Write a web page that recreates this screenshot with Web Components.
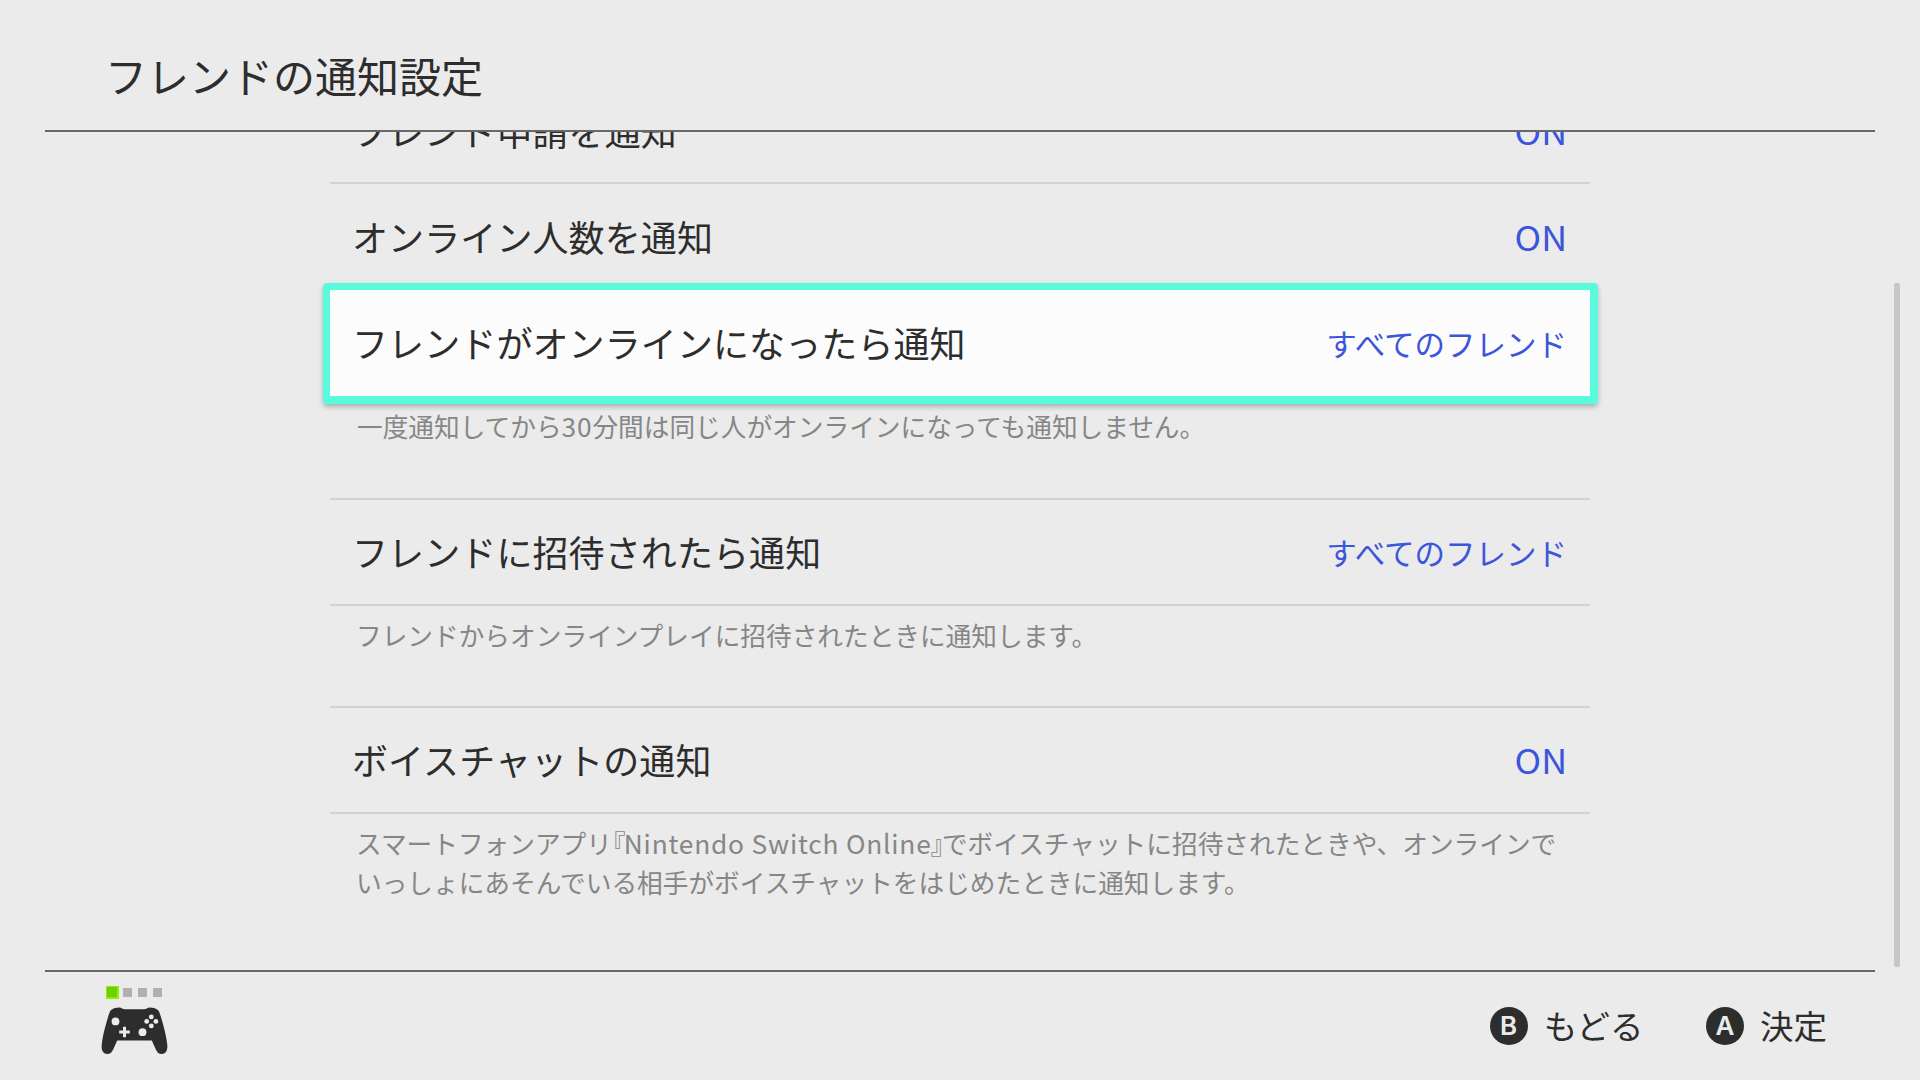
<!DOCTYPE html>
<html lang="ja">
<head>
<meta charset="UTF-8">
<title>フレンドの通知設定</title>
<style>
  html, body {
    margin: 0;
    height: 100%;
    overflow: hidden;
    background: #ebebeb;
  }
</style>
</head>
<body>
<settings-screen>
  <span slot="title">フレンドの通知設定</span>

  <setting-row value="ON">フレンド申請を通知</setting-row>
  <setting-row value="ON">オンライン人数を通知</setting-row>
  <setting-row value="すべてのフレンド" focused>フレンドがオンラインになったら通知</setting-row>
  <setting-note class="after-focus">一度通知してから<latin-run>30</latin-run>分間は同じ人がオンラインになっても通知しません。</setting-note>
  <setting-row class="raised" value="すべてのフレンド">フレンドに招待されたら通知</setting-row>
  <setting-note>フレンドからオンラインプレイに招待されたときに通知します。</setting-note>
  <setting-row class="raised" value="ON">ボイスチャットの通知</setting-row>
  <setting-note last>スマートフォンアプリ<half-bracket>『</half-bracket><latin-run>Nintendo Switch Online</latin-run><half-bracket close>』</half-bracket>でボイスチャットに招待されたときや、オンラインで<br>いっしょにあそんでいる相手がボイスチャットをはじめたときに通知します。</setting-note>

  <pad-status slot="pad" player="1"></pad-status>
  <button-hint slot="hints" key="B">もどる</button-hint>
  <button-hint slot="hints" key="A">決定</button-hint>
</settings-screen>

<script>
// Crea una clase base con su template en Shadow DOM abierto
function withTemplate(html) {
  const template = document.createElement('template');
  template.innerHTML = html;
  return class extends HTMLElement {
    constructor() {
      super();
      this.attachShadow({ mode: 'open' });
      this.shadowRoot.appendChild(template.content.cloneNode(true));
    }
  };
}

// ---------- Pantalla completa ----------
class SettingsScreen extends withTemplate(`
  <style>
    :host {
      --ink: #2d2d2d;
      --line: #d2d2d2;
      --rule: #686868;
      --value: #3b55db;
      --note: #868686;
      display: grid;
      grid-template-rows: 132px 838px 110px;
      box-sizing: border-box;
      width: 1920px;
      height: 1080px;
      background: #ebebeb;
      color: var(--ink);
      font-family: "Noto Sans CJK JP", sans-serif;
      font-size: 36px;
      white-space: nowrap;
    }
    header, footer {
      margin: 0 45px;
      display: flex;
      align-items: flex-start;
      box-sizing: border-box;
    }
    header {
      border-bottom: 2px solid var(--rule);
      padding: 45px 0 0 60px;
      font-size: 42px;
      line-height: 60px;
    }
    main {
      display: grid;
      grid-template-columns: 1fr 1260px 1fr;
      overflow: hidden;
      min-height: 0;
    }
    .list {
      grid-column: 2;
      margin-top: -54px;
    }
    .track {
      justify-self: end;
      margin: 151px 20px 3px 0;
      width: 6px;
      border-radius: 2px;
      background: #c7c7c7;
    }
    footer {
      border-top: 2px solid var(--rule);
      padding: 0 48px 0 56px;
      justify-content: space-between;
    }
    .hints {
      display: flex;
      gap: 62.5px;
      padding-top: 35px;
    }
  </style>
  <header><slot name="title"></slot></header>
  <main>
    <div class="list"><slot></slot></div>
    <div class="track"></div>
  </main>
  <footer>
    <slot name="pad"></slot>
    <div class="hints"><slot name="hints"></slot></div>
  </footer>
`) {}
customElements.define('settings-screen', SettingsScreen);

// ---------- Fila de ajuste ----------
class SettingRow extends withTemplate(`
  <style>
    :host {
      position: relative;
      display: flex;
      justify-content: space-between;
      align-items: center;
      box-sizing: border-box;
      height: 106px;
      padding: 1px 23px 0 22px;
      border-bottom: 2px solid var(--line);
      line-height: 52px;
    }
    :host(.raised) {
      padding-bottom: 1px;
    }
    :host([focused]) {
      background: #fcfcfc;
      border-bottom-color: transparent;
    }
    /* marco del cursor, por encima de las filas vecinas */
    :host([focused])::after {
      content: "";
      position: absolute;
      inset: -7px -8px -10px -7px;
      border: solid #5afbdd;
      border-width: 7px 8px 8px 7px;
      border-radius: 4px;
      box-shadow: 0 3px 5px rgba(0, 60, 50, 0.3);
    }
    .label {
      margin-bottom: 2px;
      letter-spacing: 0.1px;
    }
    .value {
      color: var(--value);
      font-size: 30.5px;
    }
    .value.latin {
      font-size: 33.5px;
      transform: scaleX(1.07);
      transform-origin: right;
    }
  </style>
  <span class="label"><slot></slot></span>
  <span class="value"></span>
`) {
  connectedCallback() {
    const $value = this.shadowRoot.querySelector('.value');
    const text = this.getAttribute('value');
    $value.textContent = text;
    $value.classList.toggle('latin', /^[A-Z]+$/.test(text));
  }
}
customElements.define('setting-row', SettingRow);

// ---------- Texto de ayuda debajo de una fila ----------
class SettingNote extends withTemplate(`
  <style>
    :host {
      display: block;
      box-sizing: border-box;
      height: 102px;
      padding: 9px 0 0 26px;
      border-bottom: 2px solid var(--line);
      color: var(--note);
      font-size: 25.68px;
      line-height: 39px;
    }
    :host(.after-focus) {
      height: 104px;
      padding-top: 10px;
      padding-left: 27px;
    }
    :host([last]) {
      border-bottom: none;
    }
  </style>
  <slot></slot>
`) {}
customElements.define('setting-note', SettingNote);

// Corchete japonés a medio ancho.
// Sin espacios alrededor del <slot>: al ser inline se verían en la frase.
class HalfBracket extends withTemplate(`<style>
    :host {
      display: inline;
      font-feature-settings: "halt";
      margin: 0 -2px 0 1px;
    }
    :host([close]) {
      margin: 0 -1.5px 0 -1px;
    }
  </style><slot></slot>`) {}
customElements.define('half-bracket', HalfBracket);

// Texto latino o cifras dentro de una frase japonesa
class LatinRun extends withTemplate(`<style>
    :host {
      display: inline;
      font-size: 26.3px;
      line-height: 0;
      letter-spacing: 0.8px;
    }
  </style><slot></slot>`) {}
customElements.define('latin-run', LatinRun);

// ---------- Indicador del mando ----------
class PadStatus extends withTemplate(`
  <style>
    :host { display: block; }
    .leds {
      display: flex;
      align-items: center;
      gap: 6px;
      height: 13px;
      margin: 14px 0 0 5px;
    }
    .leds i {
      width: 9px;
      height: 9px;
      background: #b0b0b0;
    }
    .leds i.on {
      box-sizing: border-box;
      width: 13px;
      height: 13px;
      margin-right: -2px;
      background: #6fd000;
      border: 2px solid #93ee10;
      border-width: 1px 2px 2px 1px;
    }
    svg {
      display: block;
      margin-top: 8px;
    }
  </style>
  <div class="leds"></div>
  <svg width="67" height="48" viewBox="0 0 67 48">
    <path fill="#2d2d2d" d="M18.5 0.500 C15 0.500 12.500 1.300 10.500 2.700 C9.200 3.700 8.600 5 8 7 C4.800 17 1.500 29 0.700 38 C0.200 43.500 2.300 47 6.300 47 C9.400 47 11 45 12.400 42 L16.200 33.500 H50.800 L54.600 42 C56 45 57.600 47 60.700 47 C64.700 47 66.800 43.500 66.300 38 C65.500 29 62.200 17 59 7 C58.400 5 57.800 3.700 56.500 2.700 C54.500 1.300 52 0.500 48.500 0.500 C46.500 0.500 45.300 2.300 43 2.300 H24 C21.700 2.300 20.500 0.500 18.500 0.500 Z"/>
    <g fill="#ebebeb">
      <circle cx="14.500" cy="14.400" r="3.900"/>
      <circle cx="41.500" cy="25.200" r="3.900"/>
      <circle cx="50.300" cy="9.900" r="2.400"/>
      <circle cx="50.300" cy="18.900" r="2.400"/>
      <circle cx="45.700" cy="14.400" r="2.400"/>
      <circle cx="54.900" cy="14.400" r="2.400"/>
      <path d="M22 19.700 H25 V23.500 H28.800 V26.500 H25 V30.300 H22 V26.500 H18.200 V23.500 H22 Z"/>
    </g>
  </svg>
`) {
  connectedCallback() {
    const player = Number(this.getAttribute('player'));
    const $leds = this.shadowRoot.querySelector('.leds');
    for (let n = 1; n <= 4; n++) {
      const led = document.createElement('i');
      led.classList.toggle('on', n === player);
      $leds.appendChild(led);
    }
  }
}
customElements.define('pad-status', PadStatus);

// ---------- Ayuda de botón (B / A) ----------
class ButtonHint extends withTemplate(`
  <style>
    :host {
      display: flex;
      gap: 16px;
      height: 38px;
      font-size: 33.5px;
      line-height: 36px;
    }
    .key {
      display: grid;
      place-items: center;
      width: 38px;
      height: 38px;
      border-radius: 50%;
      background: var(--ink);
      color: #ebebeb;
      font: 600 26px/38px Inter, sans-serif;
    }
  </style>
  <span class="key"></span>
  <span><slot></slot></span>
`) {
  connectedCallback() {
    this.shadowRoot.querySelector('.key').textContent = this.getAttribute('key');
  }
}
customElements.define('button-hint', ButtonHint);
</script>
</body>
</html>
